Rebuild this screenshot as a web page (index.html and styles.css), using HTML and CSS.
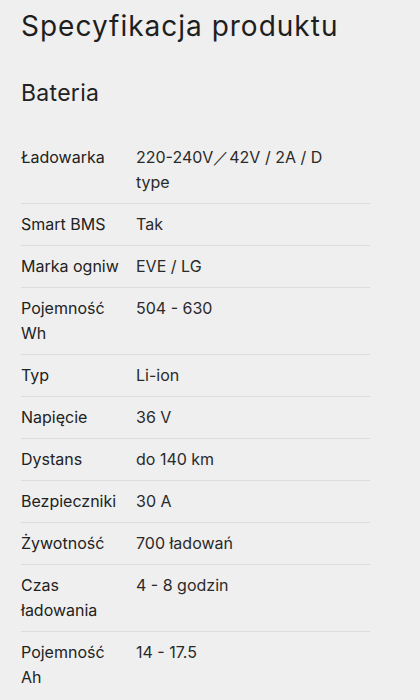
FILE: index.html
```html
<!DOCTYPE html>
<html lang="pl">
<head>
<meta charset="utf-8">
<link rel="stylesheet" href="styles.css">
</head>
<body>
<main class="page">
  <h1 class="title">Specyfikacja produktu</h1>
  <h2 class="section">Bateria</h2>
  <div class="spec">
    <div class="row"><div class="key">Ładowarka</div><div class="val">220-240V／42V / 2A / D type</div></div>
    <div class="row"><div class="key">Smart BMS</div><div class="val">Tak</div></div>
    <div class="row"><div class="key">Marka ogniw</div><div class="val">EVE / LG</div></div>
    <div class="row"><div class="key">Pojemność Wh</div><div class="val">504 - 630</div></div>
    <div class="row"><div class="key">Typ</div><div class="val">Li-ion</div></div>
    <div class="row"><div class="key">Napięcie</div><div class="val">36 V</div></div>
    <div class="row"><div class="key">Dystans</div><div class="val">do 140 km</div></div>
    <div class="row"><div class="key">Bezpieczniki</div><div class="val">30 A</div></div>
    <div class="row"><div class="key">Żywotność</div><div class="val">700 ładowań</div></div>
    <div class="row"><div class="key">Czas ładowania</div><div class="val">4 - 8 godzin</div></div>
    <div class="row"><div class="key">Pojemność Ah</div><div class="val">14 - 17.5</div></div>
  </div>
</main>
</body>
</html>
```
FILE: styles.css
```css
html, body {
  margin: 0;
  padding: 0;
  background: #efefef;
}
body {
  font-family: "Inter", "Open Sans", sans-serif;
  color: #222;
}
.page {
  padding: 0 50px 0 21px;
}
.title {
  margin: 0;
  padding-top: 7px;
  font-size: 28px;
  font-weight: 400;
  line-height: 38px;
  letter-spacing: 1px;
  color: #1e1e1e;
}
.section {
  margin: 0;
  padding-top: 32px;
  font-size: 23px;
  font-weight: 400;
  line-height: 32px;
  letter-spacing: 0.3px;
  color: #222;
}
.spec {
  margin-top: 28px;
  width: 349px;
  font-size: 16px;
  line-height: 25px;
}
.row {
  display: grid;
  grid-template-columns: 103px 1fr;
  column-gap: 12px;
  padding: 8px 16px 8px 0;
}
.row + .row {
  border-top: 1px solid #dcdcdc;
}
.val {
  color: #2a2a2a;
}
```
